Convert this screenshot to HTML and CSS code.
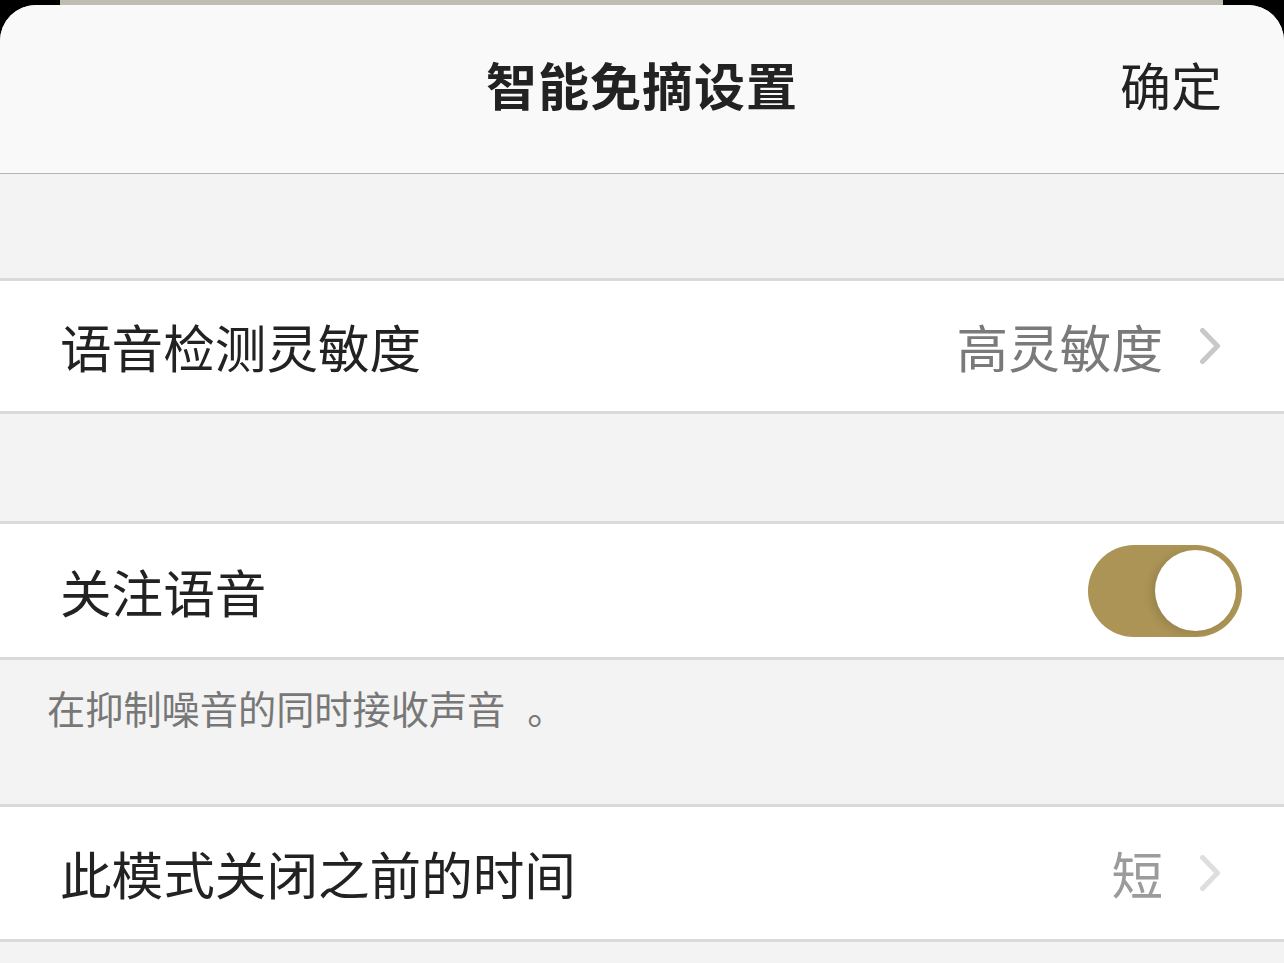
FILE: index.html
```html
<!DOCTYPE html>
<html lang="zh-CN">
<head>
<meta charset="utf-8">
<title>智能免摘设置</title>
<link rel="stylesheet" href="styles.css">
</head>
<body>
<div class="topstrip"><div class="underlay"></div></div>
<div class="sheet">
  <header class="nav">
    <span></span>
    <h1 class="title">智能免摘设置</h1>
    <span class="confirm">确定</span>
  </header>
  <div class="gap gap-first"></div>
  <div class="row row-a">
    <span class="label">语音检测灵敏度</span>
    <span class="value">高灵敏度</span>
    <svg class="chev" width="22" height="38" viewBox="0 0 22 38"><polyline points="3.5,3.5 18.5,19 3.5,34.5" fill="none" stroke="#c8c8c8" stroke-width="5" stroke-linecap="round" stroke-linejoin="round"/></svg>
  </div>
  <div class="gap gap-mid"></div>
  <div class="row row-b">
    <span class="label">关注语音</span>
    <span class="toggle"><span class="knob"></span></span>
  </div>
  <div class="note">在抑制噪音的同时接收声音<span class="stop">。</span></div>
  <div class="row row-c">
    <span class="label">此模式关闭之前的时间</span>
    <span class="value faded">短</span>
    <svg class="chev faded" width="22" height="38" viewBox="0 0 22 38"><polyline points="3.5,3.5 18.5,19 3.5,34.5" fill="none" stroke="#d4d4d4" stroke-width="5" stroke-linecap="round" stroke-linejoin="round"/></svg>
  </div>
  <div class="gap gap-end"></div>
</div>
</body>
</html>
```
FILE: styles.css
```css
* { box-sizing: border-box; margin: 0; padding: 0; }
html, body { background: #000; }
body {
  width: 1284px;
  height: 963px;
  overflow: hidden;
  font-family: "Noto Sans CJK SC", "Noto Sans", sans-serif;
}
.topstrip {
  height: 5px;
  padding: 0 61px 0 60px;
}
.underlay {
  height: 5px;
  background: #c0bcb2;
}
.sheet {
  background: #f3f3f3;
  border-radius: 36px 36px 0 0;
  overflow: hidden;
  height: 958px;
}
.nav {
  height: 169px;
  background: #f9f9f9;
  border-bottom: 1px solid #b3b3b3;
  display: grid;
  grid-template-columns: 1fr auto 1fr;
  align-items: center;
  padding: 0 62px 9px 62px;
}
.title {
  font-size: 51px;
  font-weight: 700;
  color: #222;
  letter-spacing: 1px;
  line-height: 1;
}
.confirm {
  justify-self: end;
  font-size: 51px;
  color: #222;
  line-height: 1;
}
.gap-first { height: 104px; }
.gap-mid { height: 107px; }
.gap-end { height: 30px; }
.row {
  background: #fff;
  border-top: 3px solid #dadada;
  border-bottom: 3px solid #dadada;
  display: flex;
  align-items: center;
  padding: 0 63px 0 60px;
}
.row-a { height: 136px; }
.row-b { height: 139px; padding-right: 42px; }
.row-c { height: 138px; }
.label {
  font-size: 51.6px;
  color: #222;
  line-height: 1;
  flex: 1;
}
.value {
  font-size: 51.6px;
  color: #7a7a7a;
  line-height: 1;
  margin-right: 36px;
}
.chev { display: block; }
.faded { opacity: 0.75; }
.toggle {
  width: 154px;
  height: 92px;
  border-radius: 46px;
  background: #ac9456;
  display: flex;
  align-items: center;
  justify-content: flex-end;
  padding-right: 6px;
}
.knob {
  width: 81px;
  height: 81px;
  border-radius: 50%;
  background: #fff;
  box-shadow: -4px 2px 8px rgba(0,0,0,0.12);
}
.note {
  height: 144px;
  padding: 25px 0 0 47px;
  font-size: 38.2px;
  color: #777;
  line-height: 1.2;
}
.stop { padding-left: 22px; }
```
